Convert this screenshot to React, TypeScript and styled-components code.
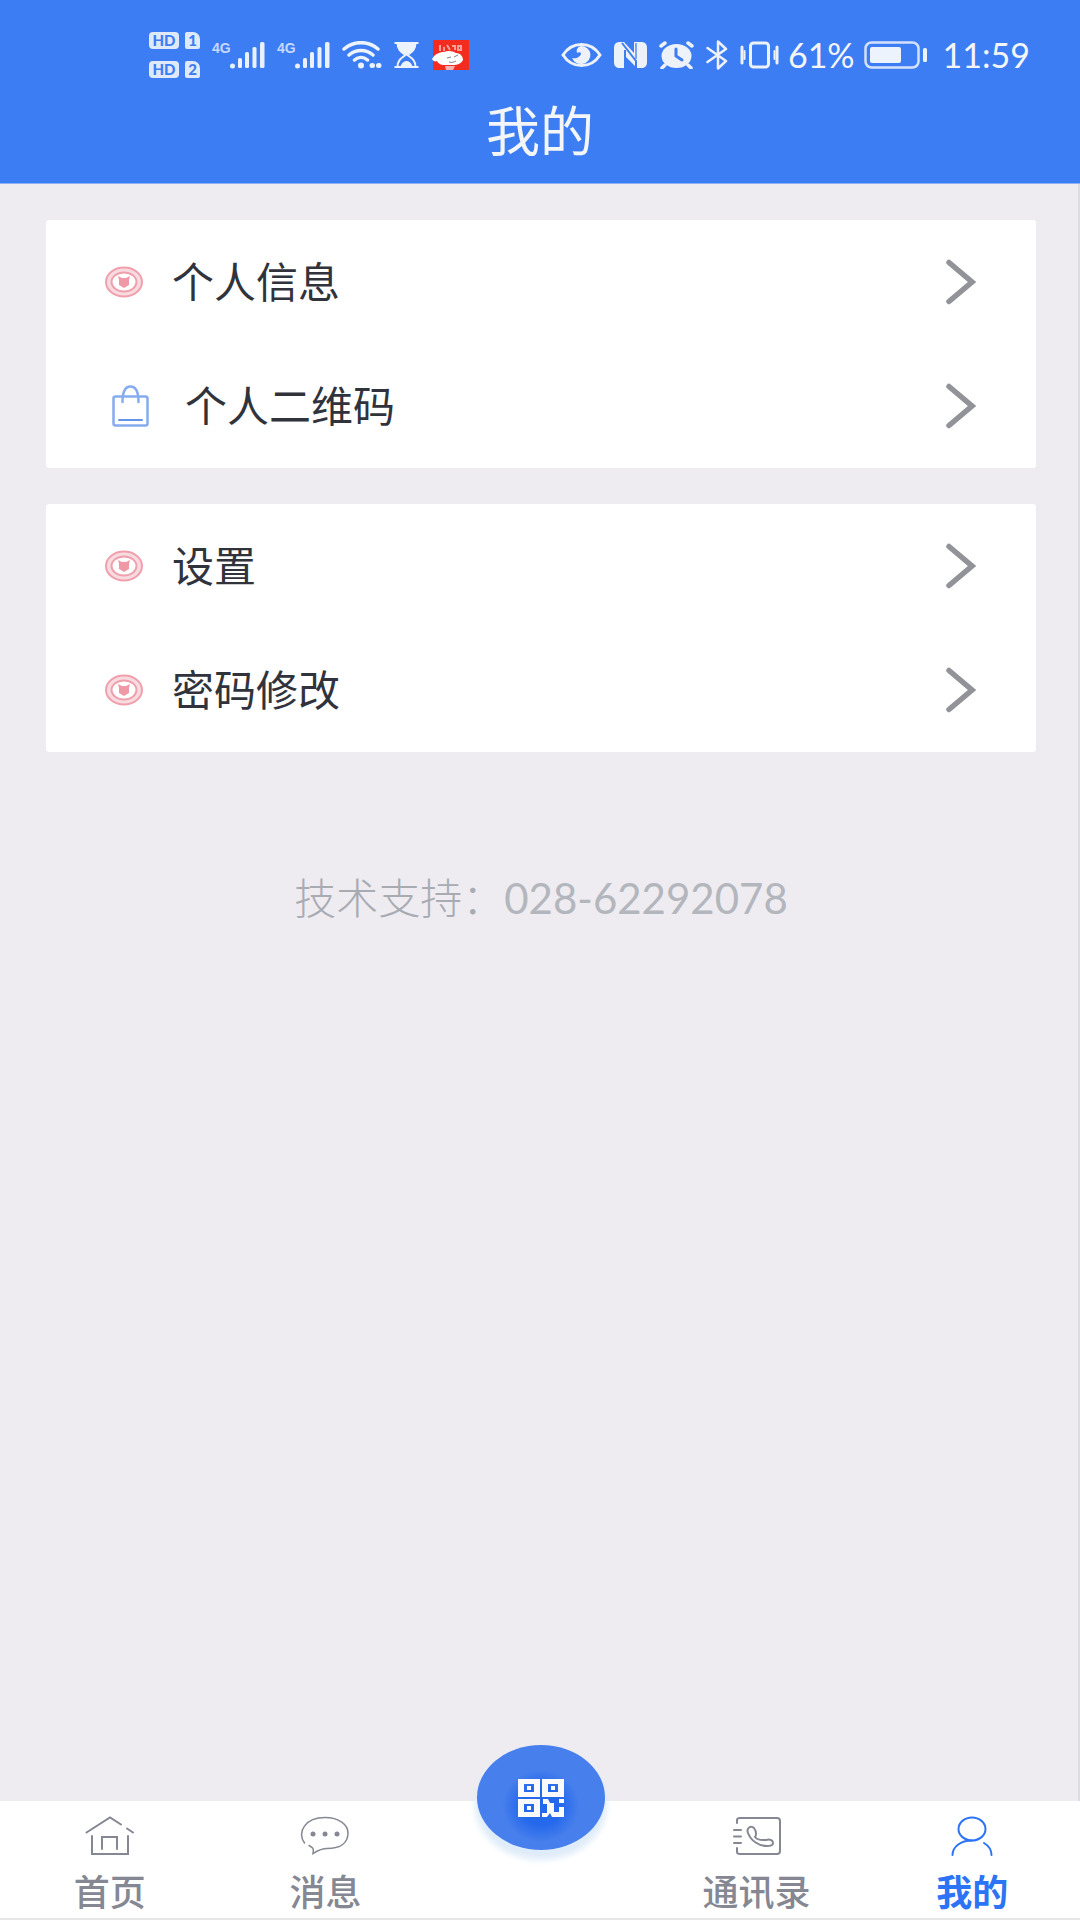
import React from "react";
import styled, { createGlobalStyle } from "styled-components";

const GlobalStyle = createGlobalStyle`
  * { box-sizing: border-box; }
  body {
    margin: 0;
    background: #eeecf1;
    font-family: Lato, "Noto Sans CJK SC", sans-serif;
  }
  button { font: inherit; border: 0; margin: 0; padding: 0; background: none; cursor: pointer; }
  a { text-decoration: none; }
  svg { display: block; flex: none; }
`;

const Page = styled.div`
  min-height: 100vh;
  display: flex;
  flex-direction: column;
`;

const Header = styled.header`
  background: #3c7df3;
  color: #f4f5f7;
  padding: 28px 0 19px;
  border-bottom: 1px solid #8db3f7;
`;

const StatusBar = styled.div`
  display: flex;
  justify-content: space-between;
  align-items: center;
  height: 54px;
  padding: 0 50px 0 149px;
`;

const StatusGroup = styled.div<{ $gap: number }>`
  display: flex;
  align-items: center;
  gap: ${(p) => p.$gap}px;
`;

const SimBadges = styled.div`
  display: grid;
  grid-template-columns: 30px 15px;
  gap: 12px 6px;
`;

const Badge = styled.span<{ $cut?: boolean }>`
  height: 17px;
  line-height: 17px;
  border-radius: ${(p) => (p.$cut ? "2px 7px 2px 2px" : "4px")};
  background: #dfe9fa;
  color: #3c7df3;
  font-size: 15px;
  font-weight: 900;
  text-align: center;
`;

const Signal = styled.div`
  display: flex;
  align-items: flex-start;
`;

const Network = styled.span`
  width: 18px;
  font-family: "Liberation Sans", Arial, sans-serif;
  font-size: 14px;
  line-height: 14px;
  font-weight: 700;
  color: #c6d8fb;
`;

const StatusText = styled.span`
  font-size: 34px;
  line-height: 40px;
`;

const Title = styled.h1`
  margin: 0;
  padding-top: 18px;
  font-size: 54px;
  line-height: 64px;
  font-weight: 400;
  text-align: center;
`;

const Main = styled.main`
  flex: 1;
  display: flex;
  flex-direction: column;
  gap: 36px;
  padding: 36px 42px 36px 46px;
  border-right: 2px solid #dcdde0;
`;

const Card = styled.section`
  background: #fff;
  border-radius: 3px;
`;

const Row = styled.button<{ $inset?: boolean }>`
  display: flex;
  align-items: center;
  gap: 29px;
  width: 100%;
  height: 124px;
  padding: 0 60px 0 ${(p) => (p.$inset ? 66 : 59)}px;
  text-align: left;
`;

const RowIcon = styled.span<{ $inset?: boolean }>`
  width: ${(p) => (p.$inset ? 44 : 38)}px;
`;

const RowLabel = styled.span`
  flex: 1;
  font-size: 42px;
  line-height: 60px;
  color: #30333c;
`;

const Support = styled.p`
  margin: 86px 0 0;
  font-size: 42px;
  line-height: 48px;
  font-weight: 300;
  text-align: center;
  color: #a9abb3;
`;

const Phone = styled.a`
  color: #b4b6bd;
  font-weight: 400;
`;

const TabBar = styled.nav`
  display: flex;
  padding-left: 2px;
  background: #fff;
  border-bottom: 2px solid #e6e6e8;
`;

const Tab = styled.a<{ $active?: boolean }>`
  flex: 1;
  display: flex;
  flex-direction: column;
  align-items: center;
  gap: 14px;
  padding: 15px 0 4px;
  color: ${(p) => (p.$active ? "#2c74f5" : "#858792")};
  font-size: 36px;
  line-height: 44px;
  font-weight: ${(p) => (p.$active ? 700 : 500)};
`;

const ScanSlot = styled.div`
  flex: 1;
  display: flex;
  justify-content: center;
  align-items: flex-start;
`;

const ScanButton = styled.button`
  display: flex;
  justify-content: center;
  align-items: center;
  width: 128px;
  height: 105px;
  margin-top: -56px;
  border-radius: 50%;
  background: radial-gradient(ellipse at 50% 58%, #2468ec 0 22%, #477fec 42%);
  box-shadow: 0 8px 6px 2px #dfecf9;
`;

const Bars = () => (
  <svg width="35" height="28" viewBox="0 0 35 28" fill="#eaf1fc">
    <circle cx="2.5" cy="25" r="2.5" />
    <rect x="8" y="17" width="4" height="10" rx="1.5" />
    <rect x="15" y="11" width="4" height="16" rx="1.5" />
    <rect x="22.500" y="6" width="4" height="21" rx="1.5" />
    <rect x="30" y="1" width="4.500" height="26" rx="1.5" />
  </svg>
);

const Wifi = () => (
  <svg width="40" height="28" viewBox="0 0 40 28" fill="none" stroke="#edf3fc" strokeWidth="3.500" strokeLinecap="round">
    <path d="M2 8C12-.5 26-.5 36 8M7 14c7-6 17-6 24 0M12.500 19c4-3.500 9-3.500 13 0" />
    <circle cx="19" cy="24.500" r="3" fill="#edf3fc" stroke="none" />
    <path d="M30 24.500h.5M36.500 24.500h.5" strokeWidth="5" />
  </svg>
);

const Hourglass = () => (
  <svg width="25" height="28" viewBox="0 0 24 28" fill="none" stroke="#edf3fc" strokeWidth="2">
    <path d="M0 2h24M0 26h24" />
    <path d="M3 2c0 7 4 9 8 12-4 3-8 5-8 12M21 2c0 7-4 9-8 12 4 3 8 5 8 12" />
    <path d="M3 2h18c0 6-4 9-9 12C7 11 3 8 3 2zM6 25c2-4 4-5 6-5s4 1 6 5z" fill="#edf3fc" stroke="none" />
  </svg>
);

const AppBadge = () => (
  <svg width="38" height="30" viewBox="-1 0 38 30">
    <path d="M1 0h36v30H1z" fill="#f42c20" />
    <path d="M8 5v6M12 7v4M15 5l3 5M20 6h3v4M26 6h3v4h-3z" stroke="#f6a09a" strokeWidth="2" fill="none" />
    <path d="M0 19c3-5 7-7 12-7 4-2 9-1 12 1 5 0 7 4 7 7-2 4-6 5-10 5H12c-4 0-6-2-7-4-2 1-4 0-5-2z" fill="#fff" />
    <path d="M13 26h10l-2 4h-7z" fill="#f3b1b4" />
    <path d="M15 18l4-1M22 17l4-2M17 22c3 1 5 0 7-1" stroke="#857b80" fill="none" />
  </svg>
);

const Eye = () => (
  <svg width="41" height="24" viewBox="0 0 41 24">
    <path d="M2 12C11-2 30-2 39 12 30 26 11 26 2 12z" fill="none" stroke="#edf1f8" strokeWidth="3" />
    <path d="M20 3a9.500 9 0 1 1-9 12c4 1 9-1 9-5-1-1-3-1-4 0-1-4 1-6 4-7z" fill="#edf1f8" />
  </svg>
);

const Nfc = () => (
  <svg width="33" height="28" viewBox="0 0 33 28" fill="#edf1f8">
    <path d="M6 1h4l10 11V1h7c4 0 6 2 6 6v14c0 4-2 6-6 6h-4L12 16v11H6c-4 0-6-2-6-6V7c0-4 2-6 6-6z" />
    <path d="M8 2l14 18v7M11 27V9" fill="none" stroke="#3c7df3" strokeWidth="2" />
    <path d="M22 2v16" stroke="#78a5f6" strokeWidth="2" />
  </svg>
);

const Alarm = () => (
  <svg width="35" height="28" viewBox="0 0 35 28">
    <ellipse cx="17.500" cy="15" rx="15" ry="12" fill="#edf1f8" />
    <path d="M2 5l4-3M33 5l-4-3M6 24l-3 3M29 24l3 3" stroke="#edf1f8" strokeWidth="3.500" strokeLinecap="round" />
    <path d="M17 8v7l6 4" fill="none" stroke="#3c7df3" strokeWidth="3" strokeLinecap="round" />
  </svg>
);

const Bluetooth = () => (
  <svg width="22" height="30" viewBox="0 0 22 30" fill="none" stroke="#edf1f8" strokeWidth="2.500" strokeLinejoin="round" strokeLinecap="round">
    <path d="M1.500 8L20 21l-8 7.500V1.500L20 9 1.500 22" />
  </svg>
);

const Vibrate = () => (
  <svg width="39" height="28" viewBox="0 0 39 28" fill="none" stroke="#edf1f8" strokeWidth="3" strokeLinecap="round">
    <rect x="10.500" y="2" width="18" height="24" rx="3" />
    <path d="M2 6v16M37 6v16" strokeWidth="3" />
    <path d="M4.500 10v8M34.500 10v8" strokeWidth="2" />
  </svg>
);

const Battery = () => (
  <svg width="64" height="28" viewBox="0 0 64 28">
    <rect x="1.500" y="1.500" width="53" height="25" rx="6" fill="none" stroke="#d3e1fb" strokeWidth="2.500" />
    <rect x="6" y="6" width="31" height="16" rx="2" fill="#edf3fc" />
    <rect x="59" y="7" width="4" height="14" rx="1.500" fill="#edf3fc" />
  </svg>
);

const Coin = () => (
  <svg width="38" height="32" viewBox="0 0 38 32">
    <ellipse cx="19" cy="16" rx="18" ry="14.500" fill="#f8dbe1" stroke="#f0a0ac" strokeWidth="2" />
    <ellipse cx="19" cy="16" rx="12.500" ry="9.500" fill="#fff" stroke="#f0a0ac" strokeWidth="2" />
    <path d="M13 10l4 2h4l4-2-1 4v5l-5 3-5-3v-5z" fill="#ef99a6" />
  </svg>
);

const Bag = () => (
  <svg width="38" height="42" viewBox="0 0 38 42" fill="none" stroke="#86abee" strokeWidth="2.500" strokeLinecap="round">
    <rect x="1.500" y="11.500" width="34" height="29" rx="2" />
    <path d="M10.500 17c0-10 3-15.500 8-15.500s8 5.500 8 15.500" />
    <path d="M7 35h23" strokeWidth="2" stroke="#6694ea" />
  </svg>
);

const Chevron = () => (
  <svg width="30" height="46" viewBox="0 0 30 46" fill="none" stroke="#929299" strokeWidth="5.500" strokeLinecap="round" strokeLinejoin="miter">
    <path d="M3 3.500L26 23 3 42.500" />
  </svg>
);

const tabStroke = { width: 50, height: 40, viewBox: "0 0 50 40", fill: "none", stroke: "currentColor", strokeWidth: 2, strokeLinecap: "round" as const };

const Home = () => (
  <svg {...tabStroke}>
    <path d="M1.500 16.500L25 1.500l11 7M42 12.500l6 4M7 20v18h36V20M17 33V21h15v12" />
  </svg>
);

const Chat = () => (
  <svg {...tabStroke}>
    <path d="M4.500 27C-3 16 5 1.500 25 1.500c14 0 23 7 23 15.500 0 11-9 15.500-21 15.500-6 0-9 2-14 5 1-5 0-6-4-8" strokeWidth="1.500" />
    <g fill="currentColor" stroke="none">
      <circle cx="13" cy="18" r="2.500" />
      <circle cx="25" cy="18" r="2.500" />
      <circle cx="37" cy="18" r="2.500" />
    </g>
  </svg>
);

const Contacts = () => (
  <svg {...tabStroke}>
    <path d="M5 7V4q0-2 3-2h37q3 0 3 3v30q0 3-3 3H8q-3 0-3-2v-4M2 14h7M2 20.500h7M2 27h7" />
    <path d="M16 17c-2-5 3-8 6-5 3 4 2 8 1 9 3 4 7 3 11 3 4-1 7 0 7 3 0 2-3 3-6 3-8 0-16-5-19-13z" />
  </svg>
);

const Person = () => (
  <svg {...tabStroke}>
    <ellipse cx="25" cy="13" rx="13.500" ry="11.500" />
    <path d="M5.500 39c0-8 8-14.500 19.500-14.500M37 27c5 3 7.500 7 7.500 12" />
  </svg>
);

const QrCode = () => (
  <svg width="48" height="40" viewBox="0 0 48 40" fill="#fafafa">
    <path fillRule="evenodd" d="M1 1h22v18H1zM7 6v8h10V6zM25 1h22v18H25zM31 6v8h10V6zM1 21h22v18H1zM7 26v8h10v-8z" />
    <path d="M10 8h4v4h-4zM34 8h4v4h-4zM10 28h4v4h-4zM26 21h5l2 4h4v9h5v-5h5v10H35l-2-4-3 4h-5v-4h5v-9h-4zM42 21h5v4h-5z" />
  </svg>
);

const groups = [
  [
    { label: "个人信息", icon: <Coin /> },
    { label: "个人二维码", icon: <Bag />, inset: true },
  ],
  [
    { label: "设置", icon: <Coin /> },
    { label: "密码修改", icon: <Coin /> },
  ],
];

export default function App() {
  return (
    <Page>
      <GlobalStyle />
      <Header>
        <StatusBar>
          <StatusGroup $gap={12}>
            <SimBadges>
              <Badge>HD</Badge>
              <Badge $cut>1</Badge>
              <Badge>HD</Badge>
              <Badge $cut>2</Badge>
            </SimBadges>
            <Signal><Network>4G</Network><Bars /></Signal>
            <Signal><Network>4G</Network><Bars /></Signal>
            <Wifi />
            <Hourglass />
            <AppBadge />
          </StatusGroup>
          <StatusGroup $gap={15}>
            <StatusGroup $gap={9}>
              <StatusGroup $gap={12}>
                <Eye />
                <Nfc />
                <Alarm />
                <Bluetooth />
                <Vibrate />
              </StatusGroup>
              <StatusText>61%</StatusText>
              <Battery />
            </StatusGroup>
            <StatusText>11:59</StatusText>
          </StatusGroup>
        </StatusBar>
        <Title>我的</Title>
      </Header>
      <Main>
        {groups.map((rows) => (
          <Card key={rows[0].label}>
            {rows.map((row) => (
              <Row key={row.label} type="button" $inset={row.inset}>
                <RowIcon $inset={row.inset}>{row.icon}</RowIcon>
                <RowLabel>{row.label}</RowLabel>
                <Chevron />
              </Row>
            ))}
          </Card>
        ))}
        <Support>
          技术支持：<Phone href="tel:028-62292078">028-62292078</Phone>
        </Support>
      </Main>
      <TabBar>
        <Tab href="#home"><Home />首页</Tab>
        <Tab href="#messages"><Chat />消息</Tab>
        <ScanSlot>
          <ScanButton type="button" aria-label="扫码"><QrCode /></ScanButton>
        </ScanSlot>
        <Tab href="#contacts"><Contacts />通讯录</Tab>
        <Tab href="#me" $active aria-current="page"><Person />我的</Tab>
      </TabBar>
    </Page>
  );
}
